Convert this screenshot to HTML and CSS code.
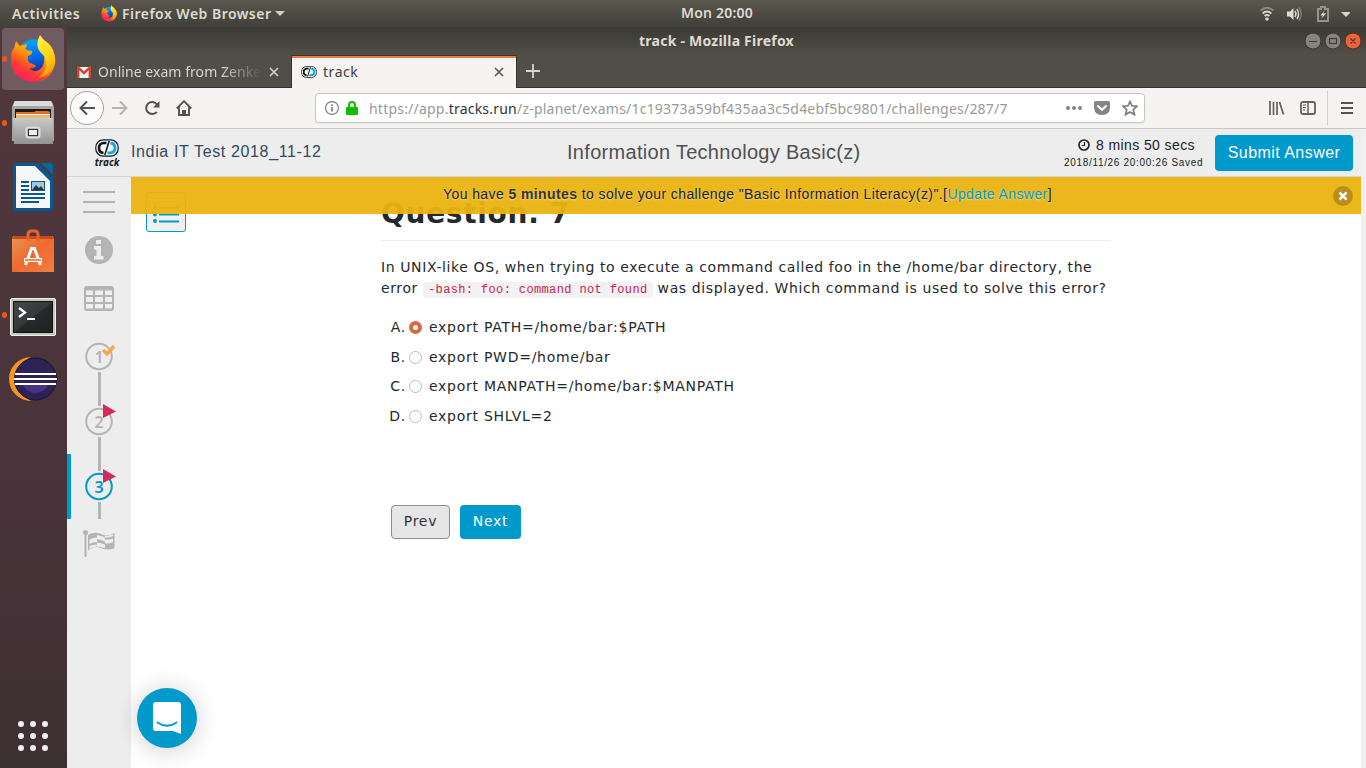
FILE: index.html
```html
<!DOCTYPE html>
<html lang="en">
<head>
<meta charset="utf-8">
<title>track</title>
<link rel="stylesheet" href="styles.css">
</head>
<body>
<svg class="defs" width="0" height="0">
  <defs>
    <linearGradient id="fox" x1="0.8" y1="0" x2="0.2" y2="1"><stop offset="0" stop-color="#ffe226"/><stop offset=".4" stop-color="#ff9a0a"/><stop offset=".7" stop-color="#ff3c30"/><stop offset="1" stop-color="#f01a70"/></linearGradient>
    <linearGradient id="globe" x1=".4" y1="0" x2=".6" y2="1"><stop offset="0" stop-color="#00a8ff"/><stop offset=".55" stop-color="#0060df"/><stop offset="1" stop-color="#3a1268"/></linearGradient>
    <linearGradient id="tail" x1=".3" y1="0" x2=".5" y2="1"><stop offset="0" stop-color="#fff04a"/><stop offset=".45" stop-color="#ffd91a"/><stop offset="1" stop-color="#ff980e"/></linearGradient>
    <linearGradient id="steel" x1="0" y1="0" x2="0" y2="1"><stop offset="0" stop-color="#c9c9c9"/><stop offset="1" stop-color="#929292"/></linearGradient>
    <linearGradient id="bag" x1="0" y1="0" x2="1" y2="1"><stop offset="0" stop-color="#e89552"/><stop offset=".5" stop-color="#ee6a2f"/><stop offset="1" stop-color="#f47c43"/></linearGradient>
    <linearGradient id="term" x1="0" y1="0" x2="1" y2="1"><stop offset="0" stop-color="#454a4a"/><stop offset=".5" stop-color="#343838"/><stop offset=".51" stop-color="#252929"/><stop offset="1" stop-color="#222"/></linearGradient>
    <symbol id="firefox" viewBox="0 0 46 48">
      <circle cx="24" cy="23" r="18.500" fill="url(#globe)"/>
      <path d="M6 6 L10 11 Q13 9 17 9.500 Q17 12 15 14 Q18 16 22 16 Q23 19 18 21 Q17 26 20 28 Q24 29 26 31 Q24 34 19 33 Q23 38 29 35 Q35 31 34 23 Q39 18 38 10 Q47 20 45 29 Q41 46 24 47 Q4 46 1 28 Q0 18 4 13 Z" fill="url(#fox)"/>
      <path d="M30 0 Q33 5 38 8 Q45 14 45 25 Q43 40 28 43 Q35 38 36 31 Q37 22 31 18 Q24 11 30 0Z" fill="url(#tail)"/>
    </symbol>
    <symbol id="track-mark" viewBox="0 0 24 18">
      <rect x=".8" y=".8" width="22.400" height="16.400" rx="7.500" fill="#f4f4f4" stroke="#15191c" stroke-width="1.200"/>
      <path d="M11.500 4H8.500Q4 4.500 4 9T8.500 14" fill="none" stroke="#15191c" stroke-width="2.600"/>
      <path d="M15.500 4.200Q20 4.500 20 9T15 13.900H12.500" fill="none" stroke="#08a8ee" stroke-width="2.800"/>
      <path d="M14.200 2L9.800 16" stroke="#15191c" stroke-width="1.500"/>
    </symbol>
  </defs>
</svg>
<div class="desktop">
  <header class="topbar">
    <div class="topbar-left">
      <span class="activities">Activities</span>
      <svg class="mini-fox" width="16" height="17"><use href="#firefox"/></svg>
      <span class="app-name">Firefox Web Browser</span>
      <svg width="10" height="6"><path d="M0 0H10L5 5Z" fill="#d5d2cc"/></svg>
    </div>
    <div class="clock">Mon 20:00</div>
    <svg class="indicators" width="90" height="20" viewBox="1260 3 90 20">
      <g fill="none" stroke="#d6d4cf" stroke-width="1.700"><path d="M1260.500 9.500Q1267 4 1273.500 9.500" stroke="#8d8b85"/><path d="M1262.500 12.500Q1267 8.500 1271.500 12.500"/><path d="M1264.500 15Q1267 13 1269.500 15"/></g>
      <circle cx="1267" cy="18" r="1.800" fill="#d6d4cf"/>
      <path d="M1287 10.500H1290L1293.500 7V19L1290 15.500H1287Z" fill="#dedcd7"/>
      <g fill="none" stroke="#dedcd7" stroke-width="1.400"><path d="M1295 10Q1297 13 1295 16"/><path d="M1297 8Q1300 13 1297 18"/><path d="M1299 6.500Q1303.500 13 1299 19.500" stroke="#85837c"/></g>
      <path d="M1318 8H1321V6H1325V8H1328V20H1318Z" fill="none" stroke="#95938d" stroke-width="2"/><path d="M1325 9L1320.500 14.500H1323L1321 18L1326 12.500H1323Z" fill="#eee"/>
      <path d="M1341 11H1351L1346 16Z" fill="#d6d4cf"/>
    </svg>
  </header>
  <div class="workspace">
    <nav class="dock">
      <div class="dock-item selected"><i class="running"></i><svg width="46" height="48"><use href="#firefox"/></svg></div>
      <div class="dock-item"><i class="running"></i><svg width="42" height="46" viewBox="0 0 42 46"><path d="M2 2Q2 1 4 1H38Q40 1 40 2L42 7V41H0V7Z" fill="#a5a5a5"/><path d="M3 1H39L41 6H1Z" fill="#dcdcdc"/><rect x="3" y="9" width="36" height="12" fill="#1c1a19"/><path d="M4 12H22L24 11H36L38 12V20H4Z" fill="#e06e24"/><path d="M4 14H38V20H4Z" fill="#f3b67a"/><path d="M4 14.500H38" stroke="#fff2df"/><path d="M1 18H41V44H2Z" fill="url(#steel)"/><rect x="14.500" y="27.500" width="13" height="10" rx="2" fill="#999" stroke="#ddd" stroke-width="2"/><rect x="16.500" y="29.500" width="9" height="6" fill="#eee" stroke="#333"/></svg></div>
      <div class="dock-item"><svg width="40" height="48" viewBox="0 0 40 48"><path d="M3 0H25L40 15V45Q40 48 37 48H3Q0 48 0 45V3Q0 0 3 0Z" fill="#07588f"/><path d="M3 3H22L37 18V45H3Z" fill="#f7f7f7"/><path d="M28 0H37Q40 0 40 3V12Z" fill="#0369a3"/><path d="M8 19H16M8 23H16M8 27H16M8 31H32M8 35H32M8 39H26" stroke="#07588f" stroke-width="2"/><rect x="18.500" y="18.500" width="13" height="9" fill="#8dd0ef" stroke="#07588f"/><path d="M19 27L23 22L26 25L28 23L31 27Z" fill="#333"/><circle cx="29.500" cy="20.500" r="1.500" fill="#f4c30c"/></svg></div>
      <div class="dock-item low"><svg width="42" height="46" viewBox="0 0 42 46"><path d="M1 7H41L42 10V43H0V10Z" fill="url(#bag)"/><path d="M0 10L2 7H40L42 10Z" fill="#c94b1a"/><path d="M16 12V6Q16 2 19 2H23Q26 2 26 6V12" fill="none" stroke="#e9622d" stroke-width="3"/><path d="M13.500 36L19.500 19.500H22.500L28.500 36" fill="none" stroke="#fff" stroke-width="3"/><path d="M12 31H30" stroke="#fff" stroke-width="4"/><path d="M13 31H29" stroke="#e9622d" stroke-width="1.500"/></svg></div>
      <div class="dock-item lower"><i class="running"></i><svg width="46" height="38" viewBox="0 0 46 38"><rect x=".5" y=".5" width="45" height="37" rx="1.500" fill="#c6c6c3" stroke="#efefec"/><rect x="3.500" y="3.500" width="39" height="31" fill="url(#term)" stroke="#111"/><path d="M9 10L15 14.500L9 19" fill="none" stroke="#fff" stroke-width="2.300"/><path d="M17 21H25" stroke="#fff" stroke-width="2"/></svg></div>
      <div class="dock-item"><svg width="48" height="44" viewBox="0 0 48 44"><path d="M22 0A22 22 0 0 0 22 44A25 25 0 0 1 22 0Z" fill="#f7941e"/><circle cx="26.500" cy="22" r="21" fill="#2c2255" stroke="#17132b"/><path d="M14 28H39Q35 36 26 36Q18 36 14 28Z" fill="#443582"/><path d="M6 17H47M5 22H48M6 27H47" stroke="#fff" stroke-width="2.200"/></svg></div>
      <svg class="app-grid" width="30" height="30" viewBox="0 0 30 30" fill="#f3f1f2"><circle cx="3" cy="3" r="3"/><circle cx="15" cy="3" r="3"/><circle cx="27" cy="3" r="3"/><circle cx="3" cy="15" r="3"/><circle cx="15" cy="15" r="3"/><circle cx="27" cy="15" r="3"/><circle cx="3" cy="27" r="3"/><circle cx="15" cy="27" r="3"/><circle cx="27" cy="27" r="3"/></svg>
    </nav>
    <section class="window">
      <div class="titlebar">
        <span class="window-title">track - Mozilla Firefox</span>
        <svg class="window-buttons" width="58" height="18" viewBox="0 0 58 18"><circle cx="9" cy="9" r="8" fill="#85837b" stroke="#393832"/><circle cx="29" cy="9" r="8" fill="#85837b" stroke="#393832"/><circle cx="49" cy="9" r="8" fill="#ee6237" stroke="#542f22"/><g fill="none" stroke="#3b3a35" stroke-width="1.100"><path d="M5 9.500H13M46.500 6.500L51.500 11.500M51.500 6.500L46.500 11.500"/><rect x="25.500" y="6.500" width="7" height="5"/></g></svg>
      </div>
      <div class="tabs">
        <div class="tab">
          <svg width="14" height="12" viewBox="0 0 14 12"><path d="M0 1H14V12H0Z" fill="#eee"/><path d="M1.200 12V1.500L7 7L12.800 1.500V12" fill="none" stroke="#d93f32" stroke-width="2.400"/></svg>
          <span class="tab-label faded">Online exam from Zenke</span>
          <svg class="tab-close" width="10" height="10" viewBox="0 0 10 10"><path d="M1 1L9 9M9 1L1 9" stroke="#d4d2cd" stroke-width="1.600"/></svg>
        </div>
        <div class="tab active">
          <svg width="16" height="12"><use href="#track-mark"/></svg>
          <span class="tab-label">track</span>
          <svg class="tab-close" width="10" height="10" viewBox="0 0 10 10"><path d="M1 1L9 9M9 1L1 9" stroke="#555" stroke-width="1.600"/></svg>
        </div>
        <svg class="new-tab" width="14" height="14" viewBox="0 0 14 14"><path d="M7 0V14M0 7H14" stroke="#d8d6d1" stroke-width="1.800"/></svg>
      </div>
      <div class="toolbar">
        <span class="back"><svg width="17" height="16" viewBox="0 0 17 16"><path d="M16 8H2M8 1.500L1.500 8L8 14.500" fill="none" stroke="#55534f" stroke-width="2"/></svg></span>
        <svg class="forward" width="17" height="16" viewBox="0 0 17 16"><path d="M1 8H15M9 1.500L15.500 8L9 14.500" fill="none" stroke="#b5b4b1" stroke-width="2"/></svg>
        <svg class="reload" width="16" height="16" viewBox="0 0 16 16"><path d="M12.800 11.800A6 6 0 1 1 13 4.500" fill="none" stroke="#55534f" stroke-width="2"/><path d="M15.500 1V7.500H9Z" fill="#55534f"/></svg>
        <svg class="home" width="16" height="16" viewBox="0 0 16 16"><path d="M.8 8.500L8 1.200L15.200 8.500M3 7V15H13V7" fill="none" stroke="#55534f" stroke-width="1.900"/><path d="M6 10H10V15H6Z" fill="#55534f"/></svg>
        <div class="url-field">
          <svg width="14" height="14" viewBox="0 0 14 14"><circle cx="7" cy="7" r="6.400" fill="none" stroke="#777" stroke-width="1.100"/><path d="M7 6V10.500M7 3.300V4.900" stroke="#777" stroke-width="1.600"/></svg>
          <svg class="lock" width="12" height="14" viewBox="0 0 12 14"><path d="M3 7V4Q3 1 6 1T9 4V7" fill="none" stroke="#12bc00" stroke-width="2"/><rect y="6" width="12" height="8" rx="1" fill="#12bc00"/></svg>
          <span class="url">https://app.<b>tracks.run</b>/z-planet/exams/1c19373a59bf435aa3c5d4ebf5bc9801/challenges/287/7</span>
          <svg class="dots" width="16" height="4" viewBox="0 0 16 4" fill="#828282"><circle cx="2" cy="2" r="2"/><circle cx="8" cy="2" r="2"/><circle cx="14" cy="2" r="2"/></svg>
          <svg class="pocket" width="16" height="14" viewBox="0 0 16 14"><path d="M1.500 0H14.500Q16 0 16 1.500V6Q16 14 8 14T0 6V1.500Q0 0 1.500 0Z" fill="#858585"/><path d="M4 5L8 8.800L12 5" fill="none" stroke="#fff" stroke-width="2" stroke-linecap="round"/></svg>
          <svg class="star" width="16" height="16" viewBox="0 0 16 16"><path d="M8 1.500L10 5.800L15 6.300L11.300 9.600L12.400 14.600L8 12L3.600 14.600L4.700 9.600L1 6.300L6 5.800Z" fill="none" stroke="#7c7c7c" stroke-width="1.700"/></svg>
        </div>
        <svg class="library" width="16" height="14" viewBox="0 0 16 14"><path d="M1 0V14M4.500 1V14M8 1V14M10.500 1L14.500 13.500" stroke="#63615d" stroke-width="1.700"/></svg>
        <svg class="sidebar-icon" width="16" height="14" viewBox="0 0 16 14"><rect x="1" y="1" width="14" height="12" rx="2" fill="none" stroke="#63615d" stroke-width="1.800"/><path d="M8 1V13" stroke="#63615d" stroke-width="1.500"/><path d="M3 4H6M3 6.500H6M3 9H5" stroke="#63615d"/></svg>
        <i class="separator"></i>
        <svg class="menu-icon" width="12" height="12" viewBox="0 0 12 12"><path d="M0 1H12M0 6H12M0 11H12" stroke="#55534f" stroke-width="2"/></svg>
      </div>
      <div class="page">
        <div class="page-body">
          <header class="exam-header">
            <div class="brand"><svg width="24" height="18"><use href="#track-mark"/></svg><span>track</span></div>
            <span class="exam-name">India IT Test 2018_11-12</span>
            <h1 class="subject">Information Technology Basic(z)</h1>
            <div class="timer">
              <div class="remaining"><svg width="12" height="12" viewBox="0 0 12 12"><circle cx="6" cy="6" r="5" fill="none" stroke="#222" stroke-width="1.700"/><path d="M6.500 3V6.500H3.800" fill="none" stroke="#222" stroke-width="1.200"/></svg><span>8 mins 50 secs</span></div>
              <div class="saved">2018/11/26 20:00:26 Saved</div>
            </div>
            <button class="submit">Submit Answer</button>
          </header>
          <div class="exam-body">
            <aside class="steps">
              <svg class="burger" width="32" height="23" viewBox="0 0 32 23"><path d="M0 1H32M0 11H32M0 21H32" stroke="#b4b4b4" stroke-width="2"/></svg>
              <svg class="info" width="28" height="28" viewBox="0 0 28 28"><circle cx="14" cy="14" r="14" fill="#b4b4b4"/><path d="M11 4H16V8H11ZM9 10H16V20H18.500V23.500H9V20H11.500V13.500H9Z" fill="#eee"/></svg>
              <svg class="table" width="30" height="25" viewBox="0 0 30 25"><rect width="30" height="25" rx="3" fill="#b4b4b4"/><path d="M2 4.500H9V9H2ZM11 4.500H19V9H11ZM21 4.500H28V9H21ZM2 11H9V16H2ZM11 11H19V16H11ZM21 11H28V16H21ZM2 18H9V22.500H2ZM11 18H19V22.500H11ZM21 18H28V22.500H21Z" fill="#eee"/></svg>
              <svg class="step" width="64" height="65" viewBox="0 0 64 65"><circle cx="32" cy="32.500" r="12.800"/><path d="M32.500 48V65" class="link"/><text x="32" y="38.500">1</text><path d="M36 26L40 30L47 22" fill="none" stroke="#fda550" stroke-width="3.500"/></svg>
              <svg class="step" width="64" height="65" viewBox="0 0 64 65"><circle cx="32" cy="32.500" r="12.800"/><path d="M32.500 0V17M32.500 48V65" class="link"/><text x="32" y="38.500">2</text><path d="M36 15L49 22.500L36 29Z" fill="#d52a5a"/></svg>
              <svg class="step current" width="64" height="65" viewBox="0 0 64 65"><circle cx="32" cy="32.500" r="12.800"/><path d="M32.500 0V17M32.500 48V65" class="link"/><text x="32" y="38.500">3</text><path d="M36 15L49 22.500L36 29Z" fill="#d52a5a"/></svg>
              <svg class="flag" width="32" height="28" viewBox="0 0 32 28"><circle cx="2.500" cy="2.500" r="2.500" fill="#b4b4b4"/><path d="M2.500 2V27" stroke="#b4b4b4" stroke-width="2"/><path d="M5 5Q12 1 18 4T31.500 3V18Q25 21 18 18T5 20.500Z" fill="#b4b4b4"/><path d="M14 5Q18 5.500 22 7.500V11.500Q18 9.500 14 9ZM6.500 9.500Q10 7.500 14 7.500V12Q10 12 6.500 14ZM22 9.500Q26 10 30 8.500V12Q26 14 22 13.500ZM14 12.500Q18 13 22 14.500V18Q18 16.500 14 16.500ZM6.500 16Q10 14.500 14 14.500V16.500Q10 17 6.500 18.500ZM22 5.500Q26 6 30 4.500V6Q26 8 22 7.500Z" fill="#eee"/></svg>
            </aside>
            <main class="content">
              <div class="notice"><p>You have <b>5 minutes</b> to solve your challenge "Basic Information Literacy(z)".[<a>Update Answer</a>]</p>
                <span class="dismiss"><svg width="10" height="10" viewBox="0 0 10 10"><path d="M1.500 1.500L8.500 8.500M8.500 1.500L1.500 8.500" stroke="#fff" stroke-width="2.500"/></svg></span>
              </div>
              <div class="list-button"><svg width="26" height="17" viewBox="0 0 26 17" fill="#0099cc"><circle cx="2" cy="2" r="2"/><circle cx="2" cy="8.500" r="2"/><circle cx="2" cy="15" r="2"/><path d="M6 1H26V3H6ZM6 7.500H26V9.500H6ZM6 14.500H26V16.500H6Z"/></svg></div>
              <article class="question">
                <h2>Question. 7</h2>
                <p>In UNIX-like OS, when trying to execute a command called foo in the /home/bar directory, the<br>error <code>-bash: foo: command not found</code> was displayed. Which command is used to solve this error?</p>
                <ol class="answers">
                  <li><b>A.</b><i class="radio checked"></i><span>export PATH=/home/bar:$PATH</span></li>
                  <li><b>B.</b><i class="radio"></i><span>export PWD=/home/bar</span></li>
                  <li><b>C.</b><i class="radio"></i><span>export MANPATH=/home/bar:$MANPATH</span></li>
                  <li><b>D.</b><i class="radio"></i><span>export SHLVL=2</span></li>
                </ol>
                <div class="pager"><button class="prev">Prev</button><button class="next">Next</button></div>
              </article>
              <div class="chat"><svg width="28" height="32" viewBox="0 0 28 32"><path d="M3 0H25Q28 0 28 3V32L20 29H3Q0 29 0 26V3Q0 0 3 0Z" fill="#fff"/><path d="M4.500 20.500Q14 27 23.500 20.500" fill="none" stroke="#0099cc" stroke-width="1.800" stroke-linecap="round"/></svg></div>
            </main>
          </div>
        </div>
        <div class="gutter"></div>
      </div>
    </section>
  </div>
</div>
</body>
</html>
```
FILE: styles.css
```css
* { box-sizing: border-box; }
body { margin: 0; overflow: hidden; font-family: "Liberation Sans", sans-serif; }
.defs { position: absolute; }
svg { display: block; flex: none; }
h1, h2, p, ol { margin: 0; padding: 0; }
.desktop { width: 1366px; height: 768px; display: flex; flex-direction: column; }

.topbar { height: 27px; display: grid; grid-template-columns: 1fr auto 1fr; align-items: center; background: linear-gradient(#5a574e, #403f39); color: #dfdbd2; font: 600 14px/20px "Noto Sans", sans-serif; }
.topbar-left { display: flex; align-items: center; padding-left: 12px; letter-spacing: .5px; }
.activities { letter-spacing: .58px; width: 68px; }
.mini-fox { margin-left: 21px; }
.app-name { margin: 0 4px 0 5px; letter-spacing: .48px; }
.topbar .clock { transform: translate(34px, -1px); letter-spacing: .22px; }
.indicators { justify-self: end; margin-right: 16px; }

.workspace { flex: 1; display: flex; min-height: 0; }
.dock { width: 67px; padding: 1px 2px 17px; display: flex; flex-direction: column; gap: 2px; background: linear-gradient(#51383d, #4a343b 55%, #3d3033); }
.dock-item { position: relative; width: 62px; height: 62px; display: flex; align-items: center; justify-content: center; }
.low { padding-top: 2px; }
.lower { padding-top: 3px; }
.selected { background: #705b61; border-radius: 4px; }
.running { position: absolute; left: 0; top: 28px; width: 5px; height: 6px; border-radius: 3px; background: #e95420; }
.app-grid { margin: auto 0 0 16px; }

.window { flex: 1; min-width: 0; display: flex; flex-direction: column; }
.titlebar { height: 28px; display: grid; grid-template-columns: 1fr auto 1fr; align-items: center; background: linear-gradient(#3a3934, #504e46); color: #dfdbd2; font: 700 14px/20px "Noto Sans", sans-serif; }
.window-title { grid-column: 2; letter-spacing: .23px; }
.window-buttons { justify-self: end; margin-right: 4px; }
.tabs { height: 33px; display: flex; background: #504e46; border-bottom: 1px solid #33322e; }
.tab { width: 224px; display: flex; align-items: center; padding: 2px 12px 0 10px; color: #d8d6d1; font: 14px/20px "Noto Sans", sans-serif; }
.tab-label { margin-left: 7px; white-space: nowrap; }
.faded { letter-spacing: .05px; width: 164px; overflow: hidden; mask-image: linear-gradient(90deg, #000 75%, transparent 100%); }
.tab-close { margin-left: auto; }
.tab.active { width: 226px; height: 33px; padding: 0 12px 0 9px; color: #3d3d3d; background: #f5f4f2; border-left: 1px solid #33322e; border-right: 1px solid #33322e; box-shadow: inset 0 1px #33322e, inset 0 3px #f0764c; }
.tab.active .tab-label { margin-left: 6px; letter-spacing: .55px; }
.new-tab { margin: 9px 0 0 9px; }
.toolbar { height: 41px; display: flex; align-items: center; background: #f5f4f2; border-bottom: 1px solid #c9c7c4; padding-left: 3px; }
.back { width: 34px; height: 34px; border: 1px solid #a5a3a0; border-radius: 50%; background: #fcfcfc; display: flex; align-items: center; justify-content: center; }
.forward { margin-left: 7px; }
.reload { margin-left: 16px; }
.home { margin-left: 16px; }
.url-field { width: 830px; height: 30px; margin-left: 123px; padding: 0 6px 0 9px; display: flex; align-items: center; background: #fff; border: 1px solid #c8c6c3; border-radius: 4px; box-shadow: 0 1px 2px #0001; }
.lock { margin-left: 7px; }
.url { margin-left: 11px; padding-top: 1px; color: #999; font: 14px/20px "Noto Sans", sans-serif; white-space: nowrap; letter-spacing: .215px; }
.url b { color: #333; font-weight: 400; }
.dots { margin-left: auto; }
.pocket { margin-left: 12px; }
.star { margin-left: 12px; }
.library { margin-left: 124px; }
.sidebar-icon { margin-left: 15px; }
.separator { width: 1px; height: 34px; margin-left: 11px; background: #d3d1ce; }
.menu-icon { margin-left: 13px; }

.page { flex: 1; min-height: 0; display: flex; }
.page-body { width: 1294px; display: flex; flex-direction: column; }
.gutter { flex: 1; background: #f1f0f0; }
.exam-header { height: 48px; flex: none; display: flex; align-items: center; background: #ededed; border-bottom: 1px solid #d5d5d5; padding: 0 8px 0 28px; white-space: nowrap; }
.brand { width: 24px; display: flex; flex-direction: column; align-items: center; font: italic 700 10px/8px "Open Sans", sans-serif; color: #15191c; padding-bottom: 1px; gap: 1px; }
.exam-name { width: 448px; padding: 0 0 2px 12px; font-size: 16px; letter-spacing: .64px; color: #34495e; }
.subject { font-size: 20px; font-weight: 400; letter-spacing: .3px; color: #505050; width: 497px; }
.timer { width: 139px; color: #222; padding-top: 3px; }
.remaining { display: flex; align-items: center; gap: 6px; margin-left: 14px; font-size: 14px; line-height: 18px; letter-spacing: .4px; }
.saved { font-size: 10px; line-height: 18px; letter-spacing: .68px; }
button { font: inherit; letter-spacing: inherit; border-radius: 4px; padding: 0; }
.submit { width: 138px; height: 36px; margin-left: auto; border: 0; background: #0099cc; color: #fff; font-size: 16px; letter-spacing: .45px; }
.exam-body { flex: 1; min-height: 0; display: flex; }
.steps { width: 64px; background: #ededed; display: flex; flex-direction: column; align-items: center; }
.burger { margin-top: 14px; }
.info { margin-top: 22px; }
.table { margin-top: 22px; margin-bottom: 13px; }
.step circle { fill: none; stroke: #b4b4b4; stroke-width: 2; }
.step .link { stroke: #b4b4b4; stroke-width: 3; }
.step text { fill: #b4b4b4; font: 600 16px "Noto Sans", sans-serif; text-anchor: middle; }
.current { background: linear-gradient(90deg, #0099cc 4px, transparent 4px); }
.step.current circle { stroke: #0099cc; }
.step.current text { fill: #0099cc; }
.flag { margin-top: 11px; }
.content { position: relative; flex: 1; background: #fff; display: flex; align-items: flex-start; padding-left: 15px; }
.notice { position: absolute; z-index: 2; top: 0; left: 0; right: 0; height: 37px; background: rgba(234, 179, 17, .95); font-size: 14px; letter-spacing: .41px; color: #222; white-space: nowrap; text-shadow: 0 1px 2px #fff8; display: flex; align-items: center; padding: 0 8px 0 312px; justify-content: space-between; }
.notice p { padding-bottom: 3px; }
.notice b { color: #34342f; }
.notice a { color: #0099cc; }
.dismiss { width: 20px; height: 20px; border-radius: 50%; background: #b98f19; display: flex; align-items: center; justify-content: center; }
.list-button { width: 40px; height: 40px; margin-top: 15px; border: 1px solid #0099cc; border-radius: 3px; background: #f0f0f0; display: flex; justify-content: center; align-items: center; padding-top: 4px; }
.question { width: 730px; margin-left: 195px; font: 14px/21px "DejaVu Sans", sans-serif; letter-spacing: .7px; color: #24292e; white-space: nowrap; }
.question p { letter-spacing: .605px; }
.question h2 { height: 64px; padding-top: 19px; border-bottom: 1px solid #eaecef; font-size: 28px; line-height: 36px; margin-bottom: 16px; }
code { font: 12px/14px "Liberation Mono", monospace; letter-spacing: .37px; color: #d02050; background: #f2f2f2; padding: 1px 5px; border-radius: 3px; }
.answers { list-style: none; margin-top: 14px; }
.answers li { display: flex; align-items: center; height: 29.6px; }
.answers b { width: 25px; text-align: right; font-weight: 400; margin-right: 3px; }
.answers span { letter-spacing: .73px; }
.radio { width: 13px; height: 13px; border: 1px solid #bcbcbc; border-radius: 50%; background: #fff; margin-right: 7px; }
.checked { border: 4px solid #d8693c; }
.pager { display: flex; gap: 10px; margin: 74px 0 0 10px; }
.pager button { height: 34px; padding-bottom: 2px; }
.prev { width: 59px; color: #333; background: #e6e6e6; border: 1px solid #8c8c8c; }
.next { width: 61px; color: #fff; background: #0099cc; border: 0; }
.chat { position: absolute; left: 6px; bottom: 20px; width: 60px; height: 60px; border-radius: 50%; background: #0099cc; display: flex; align-items: center; justify-content: center; box-shadow: 0 2px 24px #0003; }
```
